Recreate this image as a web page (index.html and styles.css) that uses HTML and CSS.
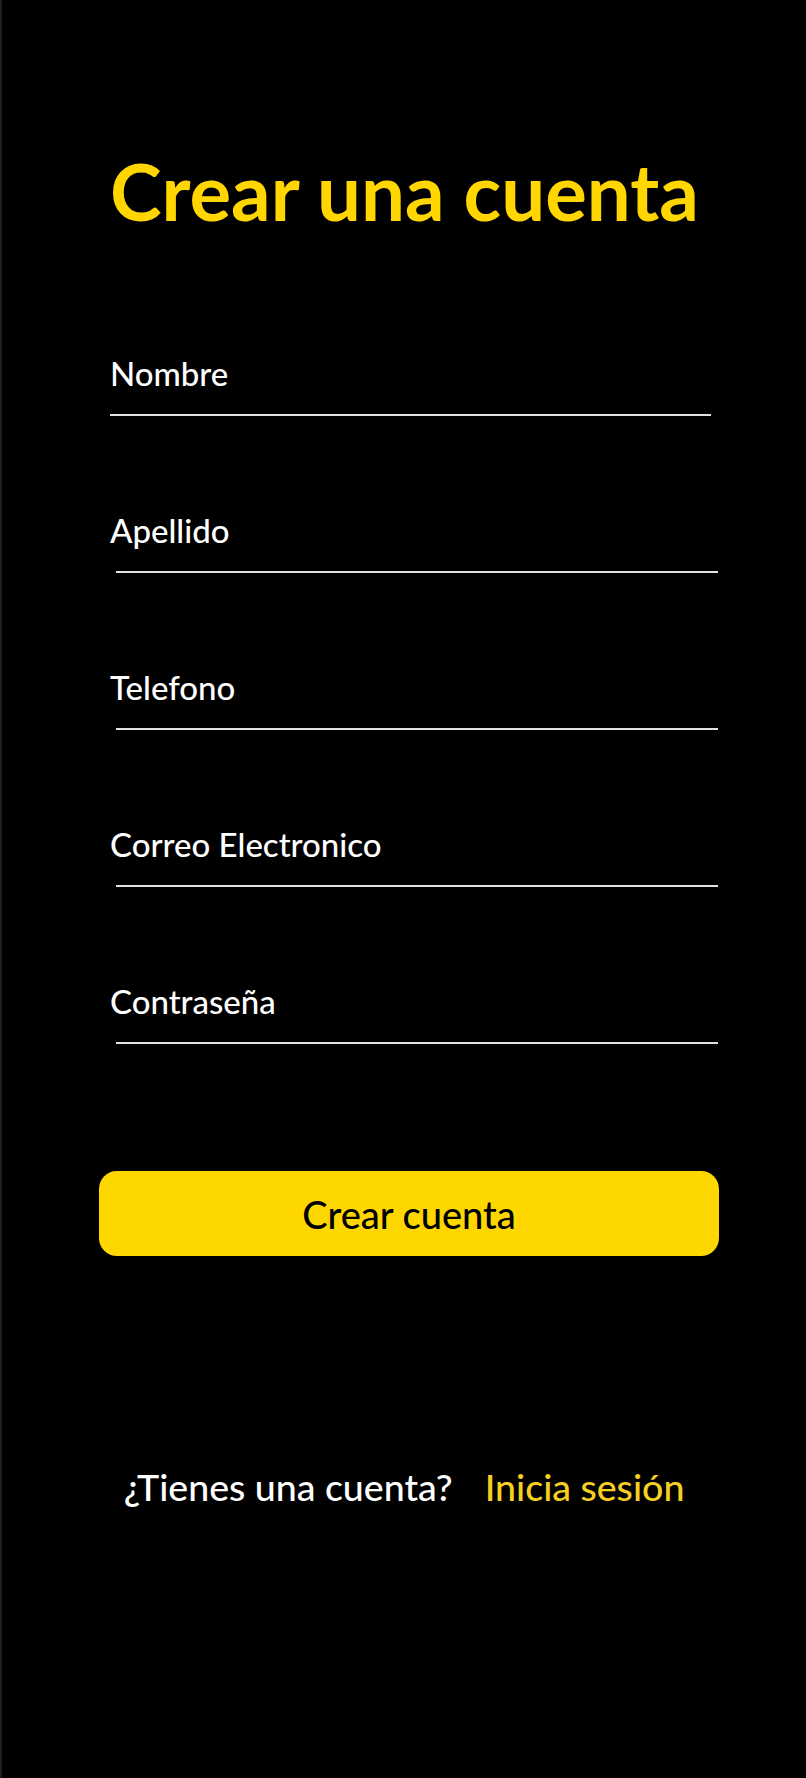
FILE: index.html
```html
<!DOCTYPE html>
<html lang="es">
<head>
<meta charset="utf-8">
<title>Crear una cuenta</title>
<link rel="stylesheet" href="styles.css">
</head>
<body>
<div class="page">
  <h1 class="title">Crear una cuenta</h1>
  <form class="fields">
    <div class="field">
      <label class="label">Nombre</label>
      <div class="input"></div>
    </div>
    <div class="field field-shift">
      <label class="label">Apellido</label>
      <div class="input"></div>
    </div>
    <div class="field field-shift">
      <label class="label">Telefono</label>
      <div class="input"></div>
    </div>
    <div class="field field-shift">
      <label class="label">Correo Electronico</label>
      <div class="input"></div>
    </div>
    <div class="field field-shift">
      <label class="label">Contraseña</label>
      <div class="input"></div>
    </div>
  </form>
  <button class="btn" type="button">Crear cuenta</button>
  <p class="footer"><span class="footer-q">¿Tienes una cuenta?</span><span class="footer-link">Inicia sesión</span></p>
</div>
</body>
</html>
```
FILE: styles.css
```css
html, body {
  margin: 0;
  padding: 0;
  background: #000;
}
.page {
  min-height: 1778px;
  box-sizing: border-box;
  border-left: 2px solid #1e1e1e;
  padding: 152px 0 0 97px;
  font-family: "Lato", "Noto Sans", sans-serif;
  display: flex;
  flex-direction: column;
}
.title {
  margin: 0 0 0 11px;
  font-size: 78px;
  line-height: 78px;
  font-weight: 700;
  color: #ffd600;
}
.fields {
  margin: 127px 0 0 11px;
  display: flex;
  flex-direction: column;
  gap: 98px;
  width: 610px;
}
.field {
  display: flex;
  flex-direction: column;
}
.label {
  font-size: 33px;
  line-height: 32px;
  font-weight: 500;
  color: #fff;
}
.input {
  height: 25px;
  border-bottom: 2px solid #e2e2e2;
  width: 601px;
}
.field-shift .input {
  margin-left: 6px;
  width: 602px;
}
.btn {
  margin: 127px 0 0 0;
  width: 620px;
  height: 85px;
  border: none;
  border-radius: 18px;
  background: #ffd700;
  color: #000;
  font-family: "Lato", "Noto Sans", sans-serif;
  font-size: 38px;
  line-height: 38px;
  font-weight: 500;
  display: flex;
  align-items: center;
  justify-content: center;
  padding: 0;
}
.footer {
  margin: 212px 0 0 -97px;
  display: flex;
  justify-content: center;
  gap: 32px;
  font-size: 37.5px;
  line-height: 37.5px;
  font-weight: 500;
}
.footer-q {
  color: #fff;
}
.footer-link {
  color: #f5d020;
}
```
